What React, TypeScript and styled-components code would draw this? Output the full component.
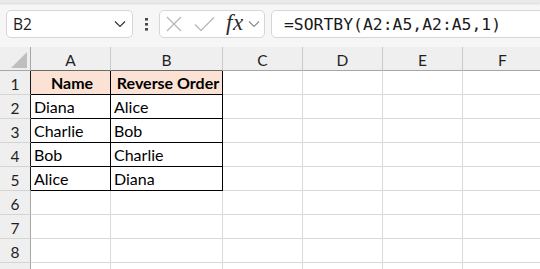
import React from "react";
import styled, { createGlobalStyle } from "styled-components";

const GlobalStyle = createGlobalStyle`
    html, body {
        margin: 0;
        padding: 0;
        background: #ffffff;
    }
    body {
        width: 540px;
        height: 269px;
        overflow: hidden;
    }
`;

const columns = ["A", "B", "C", "D", "E", "F"];
const colWidths = [80, 112, 80, 80, 80, 80];

// A1:B5 holds the data, everything else is empty
const rows: string[][] = [
    ["Name", "Reverse Order"],
    ["Diana", "Alice"],
    ["Charlie", "Bob"],
    ["Bob", "Charlie"],
    ["Alice", "Diana"],
    [],
    [],
    [],
];

const App: React.FC = () => {
    return (
        <Page>
            <GlobalStyle />
            <TopStrip />
            <FormulaBar>
                <NameBox>
                    <NameText>B2</NameText>
                    <svg width="12" height="8" viewBox="0 0 12 8">
                        <path d="M1 1.5 L6 6.5 L11 1.5" fill="none" stroke="#333" strokeWidth="1.2" />
                    </svg>
                </NameBox>
                <Dots>
                    <svg width="3" height="13" viewBox="0 0 3 13">
                        <rect x="0" y="0" width="3" height="2.6" fill="#4a4a4a" />
                        <rect x="0" y="5" width="3" height="2.6" fill="#4a4a4a" />
                        <rect x="0" y="10" width="3" height="2.6" fill="#4a4a4a" />
                    </svg>
                </Dots>
                <ActionBox>
                    <IconSlot>
                        <svg width="16" height="16" viewBox="0 0 16 16">
                            <path d="M1 1 L15 15 M15 1 L1 15" stroke="#b4b4b4" strokeWidth="1.2" fill="none" />
                        </svg>
                    </IconSlot>
                    <IconSlot>
                        <svg width="21" height="16" viewBox="0 0 21 16">
                            <path d="M1 8.5 L7 14.5 L20 1.5" stroke="#b4b4b4" strokeWidth="1.2" fill="none" />
                        </svg>
                    </IconSlot>
                    <Fx>fx</Fx>
                    <svg width="12" height="8" viewBox="0 0 12 8">
                        <path d="M1 1.5 L6 6.5 L11 1.5" fill="none" stroke="#8a8a8a" strokeWidth="1.1" />
                    </svg>
                </ActionBox>
                <FormulaBox>
                    <FormulaText>=SORTBY(A2:A5,A2:A5,1)</FormulaText>
                </FormulaBox>
            </FormulaBar>
            <Sheet>
                <Corner>
                    <svg width="16" height="16" viewBox="0 0 16 16">
                        <path d="M16 0 L16 16 L0 16 Z" fill="#bfbfbf" />
                    </svg>
                </Corner>
                {columns.map((c, i) => (
                    <ColHeader key={c} $dark={i < 2}>
                        {c}
                    </ColHeader>
                ))}
                {rows.map((row, r) => (
                    <React.Fragment key={r}>
                        <RowHeader $dark={r < 5}>{r + 1}</RowHeader>
                        {columns.map((c, ci) => {
                            const inTable = r < 5 && ci < 2;
                            return (
                                <Cell
                                    key={c}
                                    $bordered={inTable}
                                    $head={inTable && r === 0}
                                >
                                    {row[ci] ?? ""}
                                </Cell>
                            );
                        })}
                    </React.Fragment>
                ))}
                {/* row 9 peeks in below the fold */}
                <RowHeader />
                {columns.map((c) => (
                    <Cell key={c} />
                ))}
            </Sheet>
        </Page>
    );
};

export default App;

const Page = styled.div`
    width: 540px;
    height: 269px;
    overflow: hidden;
    background: #ffffff;
    display: flex;
    flex-direction: column;
`;

const TopStrip = styled.div`
    height: 3px;
    flex-shrink: 0;
    background: #e9e9e9;
    box-shadow: 0 1px 2px rgba(0, 0, 0, 0.12);
    position: relative;
    z-index: 1;
`;

const FormulaBar = styled.div`
    height: 44px;
    flex-shrink: 0;
    box-sizing: border-box;
    padding: 7px 0 0 6px;
    display: flex;
    align-items: flex-start;
    background: #f6f6f6;
`;

const Box = styled.div`
    height: 28px;
    box-sizing: border-box;
    background: #ffffff;
    border: 1px solid #d6d6d6;
    border-radius: 5px;
    display: flex;
    align-items: center;
`;

const NameBox = styled(Box)`
    width: 127px;
    padding: 0 6px 0 6px;
    justify-content: space-between;
`;

const NameText = styled.span`
    font-family: "Open Sans", "Liberation Sans", sans-serif;
    font-size: 15.5px;
    color: #1a1a1a;
`;

const Dots = styled.div`
    width: 26px;
    height: 28px;
    display: flex;
    align-items: center;
    justify-content: center;
    padding-top: 1px;
    box-sizing: border-box;
`;

const ActionBox = styled(Box)`
    width: 106px;
    padding: 0 3px 0 6px;
`;

const IconSlot = styled.span`
    display: flex;
    align-items: center;
    margin-right: 12px;
    &:nth-child(2) {
        margin-right: 11px;
    }
`;

const Fx = styled.span`
    font-family: "Liberation Serif", "DejaVu Serif", serif;
    font-style: italic;
    font-size: 23px;
    line-height: 1;
    color: #2b2b2b;
    margin-right: 4px;
    margin-top: -3px;
    letter-spacing: 0.5px;
`;

const FormulaBox = styled(Box)`
    flex: 1;
    margin-left: 6px;
    margin-right: -8px;
    padding-left: 12px;
`;

const FormulaText = styled.span`
    font-family: "DejaVu Sans Mono", "Liberation Mono", monospace;
    font-size: 16.4px;
    color: #1a1a1a;
`;

const Sheet = styled.div`
    display: grid;
    grid-template-columns: 31px ${colWidths.map((w) => `${w}px`).join(" ")};
    grid-auto-rows: 24px;
    font-family: "Lato", "Open Sans", sans-serif;
    font-size: 16px;
    color: #000;
`;

const HeaderBase = styled.div`
    box-sizing: border-box;
    background: #efefef;
    display: flex;
    align-items: center;
    justify-content: center;
    color: #1f1f1f;
    font-size: 15.5px;
`;

const Corner = styled(HeaderBase)`
    border-right: 1px solid #a6a6a6;
    border-bottom: 1px solid #a6a6a6;
    align-items: flex-end;
    justify-content: flex-end;
    padding: 0 3px 2px 0;
`;

const ColHeader = styled(HeaderBase)<{ $dark?: boolean }>`
    border-right: 1px solid #cacaca;
    border-bottom: 1px solid ${({ $dark }) => ($dark ? "#6b6b6b" : "#a6a6a6")};
    padding-top: 2px;
`;

const RowHeader = styled(HeaderBase)<{ $dark?: boolean }>`
    border-right: 1px solid ${({ $dark }) => ($dark ? "#1a1a1a" : "#a6a6a6")};
    border-bottom: 1px solid #d4d4d4;
    padding-top: 2px;
`;

const Cell = styled.div<{ $bordered?: boolean; $head?: boolean }>`
    box-sizing: border-box;
    border-right: 1px solid ${({ $bordered }) => ($bordered ? "#000" : "#dadada")};
    border-bottom: 1px solid ${({ $bordered }) => ($bordered ? "#000" : "#dadada")};
    background: ${({ $head }) => ($head ? "#fbe2d5" : "#ffffff")};
    display: flex;
    align-items: flex-end;
    justify-content: ${({ $head }) => ($head ? "center" : "flex-start")};
    padding: 0 0 2px 3px;
    font-weight: ${({ $head }) => ($head ? 700 : 400)};
    white-space: nowrap;
    overflow: hidden;
`;
